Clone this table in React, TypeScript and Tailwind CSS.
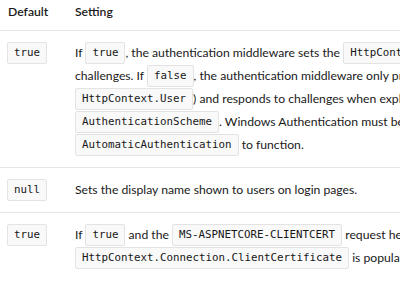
const Code = ({ children }: { children: React.ReactNode }) => (
  <code className="inline-flex h-[22px] items-center rounded-[2px] border border-[#e3e3e3] bg-[#f9f9f9] px-[6px] font-['DejaVu_Sans_Mono',monospace] text-[10.8px] text-[#171717]">
    {children}
  </code>
);

export default function App() {
  const rows = [
    {
      value: 'true',
      lines: [
        <>If <Code>true</Code>, the authentication middleware sets the <Code>HttpContext.User</Code> and responds to</>,
        <>challenges. If <Code>false</Code>, the authentication middleware only provides identity (</>,
        <><Code>HttpContext.User</Code>) and responds to challenges when explicitly requested by the</>,
        <><Code>AuthenticationScheme</Code>. Windows Authentication must be enabled in IIS for</>,
        <><Code>AutomaticAuthentication</Code> to function.</>,
      ],
    },
    {
      value: 'null',
      lines: [<>Sets the display name shown to users on login pages.</>],
    },
    {
      value: 'true',
      lines: [
        <>If <Code>true</Code> and the <Code>MS-ASPNETCORE-CLIENTCERT</Code> request header is present, the</>,
        <><Code>HttpContext.Connection.ClientCertificate</Code> is populated.</>,
      ],
    },
  ];

  return (
    <div className="h-[284px] w-[400px] overflow-hidden bg-white font-['Lato',sans-serif] text-[12.2px] text-[#1a1a1a]">
      <table className="w-[760px] border-collapse text-left">
        <thead>
          <tr className="border-b border-[#e6e6e6]">
            <th className="h-[30px] w-[67px] pb-[6px] pl-[8px] font-semibold">Default</th>
            <th className="h-[30px] pb-[6px] pl-[8px] font-semibold">Setting</th>
          </tr>
        </thead>
        <tbody>
          {rows.map((row, i) => (
            <tr key={i} className="border-b border-[#e6e6e6] last:border-b-0">
              <td className="pb-[10px] pl-[7px] pt-[11px] align-top">
                <div className="flex h-[23px] items-center">
                  <Code>{row.value}</Code>
                </div>
              </td>
              <td className="pb-[10px] pl-[8px] pt-[11px] align-top">
                {row.lines.map((line, j) => (
                  <div key={j} className="flex h-[23px] items-center whitespace-pre">{line}</div>
                ))}
              </td>
            </tr>
          ))}
        </tbody>
      </table>
    </div>
  );
}
